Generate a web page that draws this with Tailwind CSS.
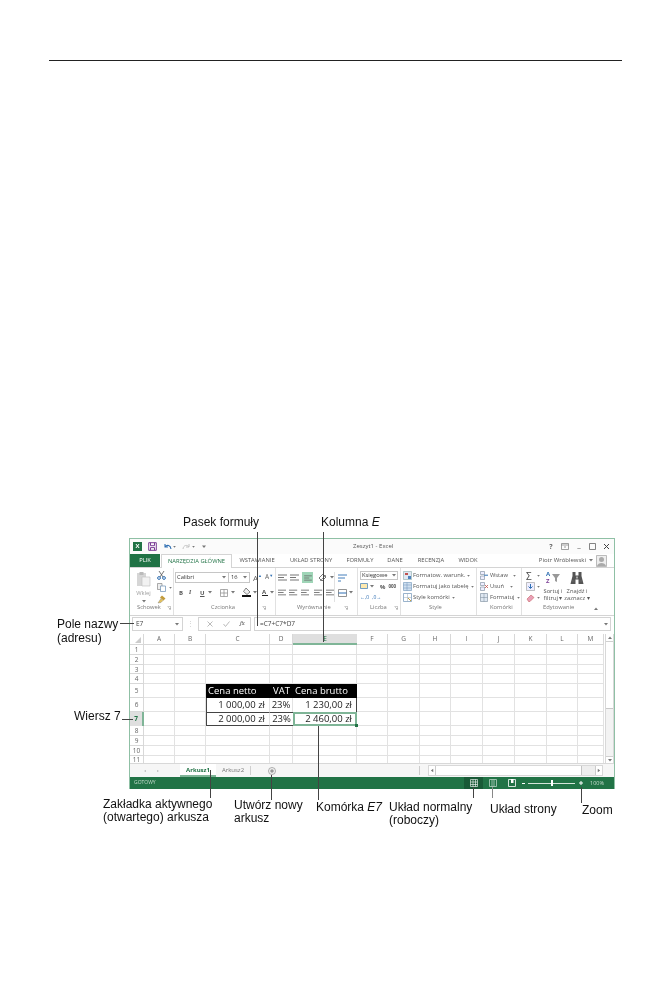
<!DOCTYPE html>
<html lang="pl">
<head>
  <meta charset="UTF-8" />
  <title>Okno programu Excel</title>
  <script src="https://cdn.jsdelivr.net/npm/@tailwindcss/browser@4"></script>
</head>
<body class="bg-white">
  <svg class="hidden">
    <symbol id="dn" viewBox="0 0 4 3"><path d="M0 0h4L2 2.600z" fill="#777"/></symbol>
    <symbol id="launch" viewBox="0 0 5 5"><path d="M.5 .5h4v4M1.500 1.500l2.500 2.500M2.500 4h1.500V2.500" fill="none" stroke="#888" stroke-width=".6"/></symbol>
    <symbol id="lines" viewBox="0 0 9 7"><path d="M0 1h9M0 3.500h6M0 6h9" stroke="#666" stroke-width=".9"/></symbol>
  </svg>

  <div class="relative w-[672px] h-[999px] pt-[60px] overflow-hidden font-['Open_Sans',sans-serif]">
    <div class="mx-[49px] h-px bg-[#222] w-[573px]"></div>

    <!-- okno Excela -->
    <div class="relative ml-[129px] mt-[477px] w-[486px] h-[251px] flex flex-col border-x border-t border-[#8fc0a5] bg-white text-[#555] blur-[0.4px]">

      <!-- pasek tytulu -->
      <div class="h-[15px] shrink-0 flex items-center pl-[3px] bg-[#fbfbfb]">
        <div class="w-[9px] h-[9px] bg-[#217346] text-white text-[6px] leading-[9px] text-center font-bold">X</div>
        <svg class="ml-[6px]" width="9" height="9" viewBox="0 0 9 9"><path d="M.7.7h7.600v7.600H.7zM2.500.7v3h4v-3M2.500 8.300V5.600h4v2.700" fill="none" stroke="#7a3d94" stroke-width="1"/></svg>
        <svg class="ml-[6px]" width="9" height="8" viewBox="0 0 9 8"><path d="M2 1v3h3M2 4c2-2.600 5.500-2 6 2" fill="none" stroke="#2f6fb3" stroke-width="1.100"/></svg>
        <svg class="ml-[1px]" width="3" height="2"><use href="#dn"/></svg>
        <svg class="ml-[6px]" width="9" height="8" viewBox="0 0 9 8"><path d="M7 1v3H4M7 4C5 1.400 1.500 2 1 6" fill="none" stroke="#c4c4c4" stroke-width="1"/></svg>
        <svg class="ml-[1px]" width="3" height="2"><use href="#dn"/></svg>
        <svg class="ml-[7px]" width="4" height="4"><use href="#dn"/></svg>
        <span class="absolute left-[223px] text-[6px]">Zeszyt1 - Excel</span>
        <div class="ml-auto flex items-center text-[#666] text-[8px] leading-none">
          <span class="w-[14px] text-center text-[7px] font-bold">?</span>
          <svg class="mx-[3px]" width="8" height="7" viewBox="0 0 8 7"><path d="M.5.500h7v6h-7zM.5 2h7M3 4h2" fill="none" stroke="#777" stroke-width=".7"/></svg>
          <span class="w-[14px] text-center">–</span>
          <svg class="mx-[3px]" width="7" height="7" viewBox="0 0 7 7"><path d="M.5.500h6v6h-6z" fill="none" stroke="#666" stroke-width=".8"/></svg>
          <svg class="mx-[4px]" width="7" height="7" viewBox="0 0 7 7"><path d="M1 1l5 5M6 1L1 6" stroke="#444" stroke-width="1"/></svg>
        </div>
      </div>

      <!-- zakladki wstazki -->
      <div class="h-[13px] shrink-0 flex text-[5.800px] leading-[13px] text-center">
        <div class="w-[30px] bg-[#217346] text-white">PLIK</div>
        <div class="w-[71px] bg-white text-[#217346] border-x border-t border-[#d4d4d4] ml-px relative z-10 -mb-px">NARZĘDZIA GŁÓWNE</div>
        <div class="w-[50px]">WSTAWIANIE</div>
        <div class="w-[58px]">UKŁAD STRONY</div>
        <div class="w-[40px]">FORMUŁY</div>
        <div class="w-[30px]">DANE</div>
        <div class="w-[42px]">RECENZJA</div>
        <div class="w-[32px]">WIDOK</div>
        <div class="ml-auto flex items-center pr-[7px] text-[6px]">
          <span>Piotr Wróblewski</span>
          <svg class="ml-[3px]" width="4" height="3"><use href="#dn"/></svg>
          <svg class="ml-[3px]" width="11" height="12" viewBox="0 0 11 12"><path d="M0 0h11v12H0z" fill="#eee"/><path d="M.5.500h10v11H.5z" fill="none" stroke="#bbb"/><circle cx="5.500" cy="4.500" r="2.500" fill="#aaa"/><path d="M1 11c1-4 8-4 9 0z" fill="#aaa"/></svg>
        </div>
      </div>

      <!-- wstazka -->
      <div class="h-[49px] shrink-0 flex border-y border-[#d4d4d4] text-[5.800px] leading-none">

        <!-- Schowek -->
        <div class="w-[44px] shrink-0 flex flex-col border-r border-[#e1e1e1] pb-[4px]">
          <div class="flex-1 flex">
            <div class="w-[27px] flex flex-col items-center pt-[3px] text-[#a0a0a0]">
              <svg width="15" height="16" viewBox="0 0 15 16"><path d="M1 2h9v13H1z" fill="#d6d6d6"/><path d="M3.500 1h4v3h-4z" fill="#bbb"/><path d="M6 6h8v9H6z" fill="#f2f2f2" stroke="#c4c4c4" stroke-width=".7"/></svg>
              <span class="mt-[4px]">Wklej</span>
              <svg class="mt-[3px]" width="4" height="3"><use href="#dn"/></svg>
            </div>
            <div class="flex flex-col gap-[3px] pt-[3px]">
              <svg width="9" height="9" viewBox="0 0 9 9"><path d="M2 0l4 6M7 0L3 6" stroke="#555" stroke-width=".8"/><circle cx="2" cy="7" r="1.400" fill="none" stroke="#2f6fb3"/><circle cx="7" cy="7" r="1.400" fill="none" stroke="#2f6fb3"/></svg>
              <div class="flex items-center"><svg width="9" height="9" viewBox="0 0 9 9"><path d="M.5.500h4.500v6H.5z" fill="#eee" stroke="#888" stroke-width=".7"/><path d="M3.500 3h5v5.500h-5z" fill="#fff" stroke="#6a8fb5" stroke-width=".7"/></svg><svg class="ml-[3px]" width="3" height="2"><use href="#dn"/></svg></div>
              <svg width="9" height="9" viewBox="0 0 9 9"><path d="M5 .500l3.500 3-2 2L3 2.500z" fill="#c39b3a"/><path d="M4 3.500L1 8l3-.5 2-2z" fill="#e6c35c" stroke="#777" stroke-width=".4"/></svg>
            </div>
          </div>
          <div class="flex items-center pl-[7px] text-[#777]"><span>Schowek</span><svg class="ml-[6px]" width="4" height="4"><use href="#launch"/></svg></div>
        </div>

        <!-- Czcionka -->
        <div class="w-[102px] shrink-0 flex flex-col border-r border-[#e1e1e1] pb-[4px] pl-[1px]">
          <div class="flex-1 flex flex-col pt-[4px] gap-[4px]">
            <div class="flex items-center">
              <div class="w-[54px] h-[11px] border border-[#c6c6c6] flex items-center pl-px text-[#333]"><span>Calibri</span><svg class="ml-auto mr-[2px]" width="4" height="3"><use href="#dn"/></svg></div>
              <div class="w-[21px] h-[11px] border border-l-0 border-[#c6c6c6] flex items-center pl-[2px] text-[#333]"><span>16</span><svg class="ml-auto mr-[2px]" width="4" height="3"><use href="#dn"/></svg></div>
              <span class="ml-[3px] text-[8px] text-[#666]">A</span><span class="text-[4px] text-[#2f6fb3] -mt-[4px]">▲</span>
              <span class="ml-[3px] text-[6.500px] text-[#666]">A</span><span class="text-[4px] text-[#2f6fb3] -mt-[4px]">▼</span>
            </div>
            <div class="flex items-center text-[6px] font-bold text-[#555] pl-[4px] h-[11px]">
              <span class="w-[10px]">B</span><span class="w-[11px] italic font-serif">I</span><span class="w-[8px] underline">U</span>
              <svg class="mr-[8px]" width="4" height="3"><use href="#dn"/></svg>
              <svg width="8" height="8" viewBox="0 0 8 8"><path d="M.5.500h7v7h-7zM4 .500v7M.5 4h7" fill="none" stroke="#888" stroke-width=".7"/></svg>
              <svg class="ml-[3px] mr-[7px]" width="4" height="3"><use href="#dn"/></svg>
              <svg width="9" height="9" viewBox="0 0 9 9"><path d="M4 0l4 4-3 2.500L1.500 3.500z" fill="#eee" stroke="#555" stroke-width=".7"/><path d="M0 7h9v2H0z" fill="#111"/></svg>
              <svg class="ml-[2px] mr-[5px]" width="4" height="3"><use href="#dn"/></svg>
              <span class="w-[6px] border-b border-[#222]">A</span>
              <svg class="ml-[2px]" width="4" height="3"><use href="#dn"/></svg>
            </div>
          </div>
          <div class="flex items-center pl-[36px] text-[#777]"><span>Czcionka</span><svg class="ml-[27px]" width="4" height="4"><use href="#launch"/></svg></div>
        </div>

        <!-- Wyrownanie -->
        <div class="w-[82px] shrink-0 flex flex-col border-r border-[#e1e1e1] pb-[4px] pl-[2px]">
          <div class="flex-1 flex pt-[4px]">
            <div class="w-[57px] flex flex-col gap-[4px] border-r border-[#e1e1e1] mb-[3px]">
              <div class="flex items-center h-[11px] gap-[3px]">
                <svg width="9" height="7"><use href="#lines"/></svg>
                <svg width="9" height="7"><use href="#lines"/></svg>
                <div class="w-[11px] h-[11px] bg-[#9fd5b7] flex items-center justify-center"><svg width="8" height="6"><use href="#lines"/></svg></div>
                <svg class="ml-[2px]" width="9" height="9" viewBox="0 0 9 9"><path d="M1 5l4-4 3 3-4 4z" fill="none" stroke="#777"/><path d="M2 8l6-6" stroke="#999"/></svg>
                <svg width="4" height="3"><use href="#dn"/></svg>
              </div>
              <div class="flex items-center h-[11px] gap-[3px]">
                <svg width="9" height="7"><use href="#lines"/></svg>
                <svg width="9" height="7"><use href="#lines"/></svg>
                <svg width="9" height="7"><use href="#lines"/></svg>
                <svg class="ml-[2px]" width="9" height="7"><use href="#lines"/></svg>
                <svg width="9" height="7"><use href="#lines"/></svg>
              </div>
            </div>
            <div class="flex flex-col gap-[4px] pl-[3px]">
              <div class="h-[11px] flex items-center"><svg width="9" height="8" viewBox="0 0 9 8"><path d="M0 1h9M0 4h7M0 7h3" stroke="#2f6fb3" stroke-width=".9"/></svg></div>
              <div class="h-[11px] flex items-center"><svg width="9" height="8" viewBox="0 0 9 8"><path d="M.5.500h8v7h-8z" fill="none" stroke="#777" stroke-width=".8"/><path d="M.5 4h8" stroke="#2f6fb3"/></svg><svg class="ml-[2px]" width="4" height="3"><use href="#dn"/></svg></div>
            </div>
          </div>
          <div class="flex items-center pl-[19px] text-[#777]"><span>Wyrównanie</span><svg class="ml-[13px]" width="4" height="4"><use href="#launch"/></svg></div>
        </div>

        <!-- Liczba -->
        <div class="w-[43px] shrink-0 flex flex-col border-r border-[#e1e1e1] pb-[4px] pl-[2px]">
          <div class="flex-1 flex flex-col pt-[3px] gap-[2px]">
            <div class="w-[38px] h-[9px] border border-[#c6c6c6] flex items-center pl-px text-[#333]"><span>Księgowe</span><svg class="ml-auto mr-px" width="4" height="3"><use href="#dn"/></svg></div>
            <div class="flex items-center h-[9px] text-[6px]">
              <svg width="8" height="8" viewBox="0 0 8 8"><path d="M.5.500h7v5h-7z" fill="#fde9b0" stroke="#3a7ab8" stroke-width=".7"/></svg>
              <svg class="ml-[2px] mr-[6px]" width="4" height="3"><use href="#dn"/></svg>
              <span class="font-bold">%</span><span class="ml-[3px] text-[4.500px] font-bold">000</span>
            </div>
            <div class="flex items-center h-[9px] text-[5px] gap-[3px] text-[#2f6fb3]"><span>←,0</span><span>,0→</span></div>
          </div>
          <div class="flex items-center pl-[10px] text-[#777]"><span>Liczba</span><svg class="ml-[7px]" width="4" height="4"><use href="#launch"/></svg></div>
        </div>

        <!-- Style -->
        <div class="w-[76px] shrink-0 flex flex-col border-r border-[#e1e1e1] pb-[4px] pl-[2px]">
          <div class="flex-1 flex flex-col pt-[2px]">
            <div class="h-[11px] flex items-center"><svg class="mr-px" width="9" height="9" viewBox="0 0 9 9"><path d="M.5.500h8v8h-8z" fill="#dfe8f2" stroke="#8aa" stroke-width=".6"/><path d="M2 2h3v2H2z" fill="#c0504d"/><path d="M5 5h3v3H5z" fill="#4f81bd"/></svg><span>Formatow. warunk.</span><svg class="ml-[2px]" width="3" height="2"><use href="#dn"/></svg></div>
            <div class="h-[11px] flex items-center"><svg class="mr-px" width="9" height="9" viewBox="0 0 9 9"><path d="M.5.500h8v8h-8z" fill="#cfe0f0" stroke="#6f93b8" stroke-width=".6"/><path d="M.5 3h8M.5 6h8M4 .500v8" stroke="#6f93b8" stroke-width=".5"/></svg><span>Formatuj jako tabelę</span><svg class="ml-[2px]" width="3" height="2"><use href="#dn"/></svg></div>
            <div class="h-[11px] flex items-center"><svg class="mr-px" width="9" height="9" viewBox="0 0 9 9"><path d="M.5.500h8v8h-8z" fill="#fff" stroke="#6f93b8" stroke-width=".7"/><path d="M.5 4.500h8M4.500.500v8" stroke="#9ab" stroke-width=".5"/><path d="M5 5l3 3" stroke="#c39b3a"/></svg><span>Style komórki</span><svg class="ml-[2px]" width="3" height="2"><use href="#dn"/></svg></div>
          </div>
          <div class="pl-[26px] text-[#777]">Style</div>
        </div>

        <!-- Komorki -->
        <div class="w-[45px] shrink-0 flex flex-col border-r border-[#e1e1e1] pb-[4px] pl-[3px]">
          <div class="flex-1 flex flex-col pt-[2px]">
            <div class="h-[11px] flex items-center"><svg class="mr-[2px]" width="8" height="9" viewBox="0 0 8 9"><path d="M.5.500h4v3h-4zM.5 5h4v3.500h-4z" fill="#eef" stroke="#789" stroke-width=".6"/><path d="M4 4.200h4" stroke="#2f6fb3"/></svg><span>Wstaw</span><svg class="ml-[5px]" width="3" height="2"><use href="#dn"/></svg></div>
            <div class="h-[11px] flex items-center"><svg class="mr-[2px]" width="8" height="9" viewBox="0 0 8 9"><path d="M.5.500h4v3h-4zM.5 5h4v3.500h-4z" fill="#eef" stroke="#789" stroke-width=".6"/><path d="M5 3l3 3M8 3L5 6" stroke="#c0504d" stroke-width=".8"/></svg><span>Usuń</span><svg class="ml-[6px]" width="3" height="2"><use href="#dn"/></svg></div>
            <div class="h-[11px] flex items-center"><svg class="mr-[2px]" width="8" height="9" viewBox="0 0 8 9"><path d="M.5.500h7v8h-7z" fill="#dfe8f2" stroke="#789" stroke-width=".6"/><path d="M.5 4.500h7M4 .500v8" stroke="#789" stroke-width=".5"/></svg><span>Formatuj</span><svg class="ml-[2px]" width="3" height="2"><use href="#dn"/></svg></div>
          </div>
          <div class="pl-[10px] text-[#777]">Komórki</div>
        </div>

        <!-- Edytowanie -->
        <div class="flex-1 flex flex-col pb-[4px] pl-[4px]">
          <div class="flex-1 flex pt-[2px]">
            <div class="w-[17px] flex flex-col">
              <div class="h-[11px] flex items-center"><span class="text-[10px] w-[9px] text-[#444]">Σ</span><svg class="ml-[2px]" width="3" height="2"><use href="#dn"/></svg></div>
              <div class="h-[11px] flex items-center"><svg width="9" height="9" viewBox="0 0 9 9"><path d="M.5.500h8v8h-8z" fill="#eef" stroke="#999" stroke-width=".6"/><path d="M4.500 2v4M2.500 4.500l2 2 2-2" fill="none" stroke="#2f6fb3" stroke-width="1"/></svg><svg class="ml-[2px]" width="3" height="2"><use href="#dn"/></svg></div>
              <div class="h-[11px] flex items-center"><svg width="9" height="8" viewBox="0 0 9 8"><path d="M1 5l4-4 3 2.500-4 4H2.500z" fill="#e8a0b8" stroke="#c0504d" stroke-width=".5"/></svg><svg class="ml-[2px]" width="3" height="2"><use href="#dn"/></svg></div>
            </div>
            <div class="w-[20px] flex flex-col items-center">
              <div class="h-[15px] flex items-center"><div class="w-[6px] flex flex-col text-[6px] leading-[7px] font-bold text-[#2f6fb3]"><span>A</span><span class="text-[#7a3d94]">Z</span></div><svg width="8" height="8" viewBox="0 0 8 8"><path d="M0 0h8L5 4v4L3 7V4z" fill="#999"/></svg></div>
              <span class="mt-[3px] leading-[7px] whitespace-nowrap">Sortuj i</span>
              <span class="leading-[7px] whitespace-nowrap">filtruj ▾</span>
            </div>
            <div class="w-[28px] flex flex-col items-center">
              <svg class="mt-px" width="14" height="14" viewBox="0 0 14 14"><path d="M2.500 1h3v3.500h3V1h3v4l2 8h-5V8.500H5.500V13h-5l2-8z" fill="#555"/><path d="M6.500 5.500h1v2h-1z" fill="#fff"/><path d="M1.800 10h2.500M9.700 10h2.500" stroke="#777" stroke-width=".6"/></svg>
              <span class="mt-[3px] leading-[7px] whitespace-nowrap">Znajdź i</span>
              <span class="leading-[7px] whitespace-nowrap">zaznacz ▾</span>
            </div>
          </div>
          <div class="flex items-center pl-[17px] text-[#777]"><span>Edytowanie</span><svg class="ml-[20px] rotate-180" width="4" height="3"><use href="#dn"/></svg></div>
        </div>
      </div>

      <!-- pasek formuly -->
      <div class="h-[18px] shrink-0 flex pt-px pb-[3px] pl-[2px] pr-[3px] text-[#444] text-[6.500px]">
        <div class="w-[51px] border border-[#d4d4d4] flex items-center pl-[3px]"><span>E7</span><svg class="ml-auto mr-[3px]" width="4" height="3"><use href="#dn"/></svg></div>
        <div class="w-[15px] flex items-center justify-center text-[#ccc]">⋮</div>
        <div class="w-[53px] border border-[#d4d4d4] flex items-center pl-[8px] gap-[10px] text-[#aaa]">
          <svg width="6" height="6" viewBox="0 0 6 6"><path d="M.5.500l5 5M5.500.500l-5 5" stroke="#bbb"/></svg>
          <svg width="7" height="6" viewBox="0 0 7 6"><path d="M.5 3l2 2.500L6.500.500" fill="none" stroke="#bbb"/></svg>
          <span class="italic font-serif text-[#555]">fx</span>
        </div>
        <div class="flex-1 ml-[3px] border border-[#d4d4d4] flex items-center pl-[5px]"><span>=C7+C7*D7</span><svg class="ml-auto mr-[2px]" width="4" height="3"><use href="#dn"/></svg></div>
      </div>

      <!-- arkusz -->
      <div class="flex-1 min-h-0 flex">
        <div id="sheet" class="grid grid-cols-[14px_31px_31px_64px_23px_64px_31px_32px_31px_32px_32px_32px_31px_26px] grid-rows-[11px_10px_10px_9px_10px_14px_14px_14px_10px_10px_10px_8px] w-[475px] overflow-hidden"></div>
        <div class="w-[9px] ml-[1px] flex flex-col bg-[#f3f3f3] border-x border-[#d8d8d8]">
          <div class="h-[8px] bg-white border-b border-[#d0d0d0] flex items-center justify-center"><svg class="rotate-180" width="4" height="3"><use href="#dn"/></svg></div>
          <div class="h-[67px] bg-white border-b border-[#c8c8c8]"></div>
          <div class="flex-1"></div>
          <div class="h-[7px] bg-white border-t border-[#d0d0d0] flex items-center justify-center"><svg width="4" height="3"><use href="#dn"/></svg></div>
        </div>
      </div>
      <!-- uchwyt zaznaczenia E7 -->
      <div class="absolute left-[225px] top-[185px] w-[3px] h-[3px] bg-[#217346]"></div>

      <!-- zakladki arkuszy -->
      <div class="h-[14px] shrink-0 flex items-stretch bg-[#f6f6f6] border-t border-[#d8d8d8] text-[6px] leading-[12px]">
        <div class="w-[50px] flex items-center pl-[14px] gap-[11px] text-[4px] text-[#bbb]"><span>◂</span><span>▸</span></div>
        <div class="w-[36px] bg-white text-center font-bold text-[#217346] border-b-2 border-[#7fb597]">Arkusz1</div>
        <div class="w-[35px] text-center text-[#777] border-r border-[#cfcfcf] my-[2px] leading-[9px]">Arkusz2</div>
        <div class="w-[42px] flex items-center justify-center"><svg width="8" height="8" viewBox="0 0 8 8"><circle cx="4" cy="4" r="3.500" fill="none" stroke="#999" stroke-width=".8"/><circle cx="4" cy="4" r="1.800" fill="#999"/></svg></div>
        <div class="w-[127px] flex justify-end"><div class="w-px bg-[#ccc] my-[2px]"></div></div>
        <div class="ml-[8px] w-[175px] my-[1px] flex bg-[#eee] border border-[#d8d8d8]">
          <div class="w-[7px] bg-white border-r border-[#ccc] flex items-center justify-center"><svg class="rotate-90" width="4" height="3"><use href="#dn"/></svg></div>
          <div class="w-[146px] bg-white border-r border-[#c4c4c4]"></div>
          <div class="flex-1"></div>
          <div class="w-[7px] bg-white border-l border-[#ccc] flex items-center justify-center"><svg class="-rotate-90" width="4" height="3"><use href="#dn"/></svg></div>
        </div>
      </div>

      <!-- pasek stanu -->
      <div class="flex-1 min-h-[11px] max-h-[12px] flex items-center bg-[#217346] text-[5px] text-[#c7dccf]">
        <span class="pl-[4px] w-[334px]">GOTOWY</span>
        <div class="w-[19px] h-full bg-[#195a37] flex items-center justify-center"><svg width="8" height="8" viewBox="0 0 8 8"><path d="M.5.500h7v7h-7zM3 .500v7M5.500.500v7M.5 3h7M.5 5.500h7" fill="none" stroke="#fff" stroke-width=".6"/></svg></div>
        <div class="w-[19px] flex justify-center"><svg width="8" height="8" viewBox="0 0 8 8"><path d="M.5.500h7v7h-7zM3 .500v7M5 .500v7" fill="none" stroke="#b8d3c4" stroke-width=".8"/></svg></div>
        <div class="w-[19px] flex justify-center"><svg width="8" height="8" viewBox="0 0 8 8"><path d="M.5.500h7v7h-7z" fill="none" stroke="#fff" stroke-width=".8"/><path d="M3 0h2.500v4H3z" fill="#fff"/></svg></div>
        <div class="ml-[1px] flex items-center">
          <div class="w-[3px] h-px bg-white"></div>
          <div class="ml-[3px] w-[23px] h-px bg-[#d5e5da]"></div>
          <div class="w-[2px] h-[6px] bg-white"></div>
          <div class="w-[22px] h-px bg-[#d5e5da]"></div>
          <svg class="ml-[4px]" width="4" height="4" viewBox="0 0 4 4"><path d="M2 0v4M0 2h4" stroke="#fff"/></svg>
        </div>
        <span class="ml-[7px] text-[5.500px]">100%</span>
      </div>
    </div>

    <!-- linie objasnien -->
    <div class="absolute left-[257px] top-[532px] w-px h-[94px] bg-[#444]"></div>
    <div class="absolute left-[323px] top-[532px] w-px h-[110px] bg-[#444]"></div>
    <div class="absolute left-[120px] top-[623px] w-[14px] h-px bg-[#444]"></div>
    <div class="absolute left-[122px] top-[719px] w-[11px] h-px bg-[#444]"></div>
    <div class="absolute left-[210px] top-[770px] w-px h-[28px] bg-[#444]"></div>
    <div class="absolute left-[271px] top-[775px] w-px h-[25px] bg-[#444]"></div>
    <div class="absolute left-[318px] top-[726px] w-px h-[74px] bg-[#444]"></div>
    <div class="absolute left-[473px] top-[787px] w-px h-[11px] bg-[#444]"></div>
    <div class="absolute left-[492px] top-[787px] w-px h-[11px] bg-[#888]"></div>
    <div class="absolute left-[581px] top-[787px] w-px h-[16px] bg-[#444]"></div>

    <!-- podpisy -->
    <div class="absolute inset-0 blur-[0.25px] font-['Liberation_Sans',sans-serif] text-[12px] leading-[13px] text-[#111]">
      <p class="absolute left-[183px] top-[516px]">Pasek formuły</p>
      <p class="absolute left-[321px] top-[516px]">Kolumna <i>E</i></p>
      <p class="absolute left-[57px] top-[617px] leading-[14px]">Pole nazwy<br>(adresu)</p>
      <p class="absolute left-[74px] top-[710px]">Wiersz 7</p>
      <p class="absolute left-[103px] top-[798px]">Zakładka aktywnego<br>(otwartego) arkusza</p>
      <p class="absolute left-[234px] top-[799px]">Utwórz nowy<br>arkusz</p>
      <p class="absolute left-[316px] top-[801px]">Komórka <i>E7</i></p>
      <p class="absolute left-[389px] top-[801px]">Układ normalny<br>(roboczy)</p>
      <p class="absolute left-[490px] top-[803px]">Układ strony</p>
      <p class="absolute left-[582px] top-[804px]">Zoom</p>
    </div>
  </div>

  <script>
    // siatka arkusza: naglowki kolumn, numery wierszy i komorki
    const sheet = document.getElementById('sheet');
    const cols = ['', 'A', 'B', 'C', 'D', 'E', 'F', 'G', 'H', 'I', 'J', 'K', 'L', 'M'];
    const data = {
      'C5': ['Cena netto', 'bg-black text-white pl-[2px]'],
      'D5': ['VAT', 'bg-black text-white justify-center'],
      'E5': ['Cena brutto', 'bg-black text-white pl-[2px]'],
      'C6': ['1 000,00 zł', 'justify-end pr-[4px] border-l border-l-[#444] border-r border-r-[#e2e2e2]'],
      'D6': ['23%', 'justify-center border-r border-r-[#e2e2e2]'],
      'E6': ['1 230,00 zł', 'justify-end pr-[4px] border-r border-r-[#444]'],
      'C7': ['2 000,00 zł', 'justify-end pr-[4px] border-l border-l-[#444] border-b border-b-[#444] border-t border-t-[#444] border-r border-r-[#e2e2e2]'],
      'D7': ['23%', 'justify-center border-b border-b-[#444] border-t border-t-[#444]'],
      'E7': ['2 460,00 zł', 'justify-end pr-[3px] border-2 border-[#7fb597]']
    };
    for (let r = 0; r <= 11; r++) {
      cols.forEach((c, i) => {
        const div = document.createElement('div');
        const id = c + r;
        if (r === 0) {
          div.textContent = c;
          div.className = c === 'E'
            ? 'bg-[#dfdfdf] border-b-2 border-[#7fb597] text-center text-[6.500px] leading-[10px] text-[#217346]'
            : 'border-r border-b border-[#d8d8d8] text-center text-[6.500px] leading-[10px] text-[#666]';
          if (i === 0) div.innerHTML = '<svg class="ml-[5px] mt-[3px]" width="6" height="6" viewBox="0 0 6 6"><path d="M6 0v6H0z" fill="#ccc"/></svg>';
        } else if (i === 0) {
          div.textContent = r;
          div.className = r === 7
            ? 'bg-[#dfdfdf] border-r-2 border-[#7fb597] text-center text-[6.500px] leading-[14px] font-bold text-[#217346]'
            : 'border-r border-b border-[#d8d8d8] text-[6.500px] leading-[9px] text-[#666] flex items-center justify-center';
        } else if (data[id]) {
          div.textContent = data[id][0];
          div.className = 'flex items-center text-[9.500px] leading-none text-[#222] whitespace-nowrap overflow-hidden ' + data[id][1];
        } else {
          div.className = 'border-r border-b border-[#e2e2e2]';
        }
        sheet.appendChild(div);
      });
    }
  </script>
</body>
</html>
